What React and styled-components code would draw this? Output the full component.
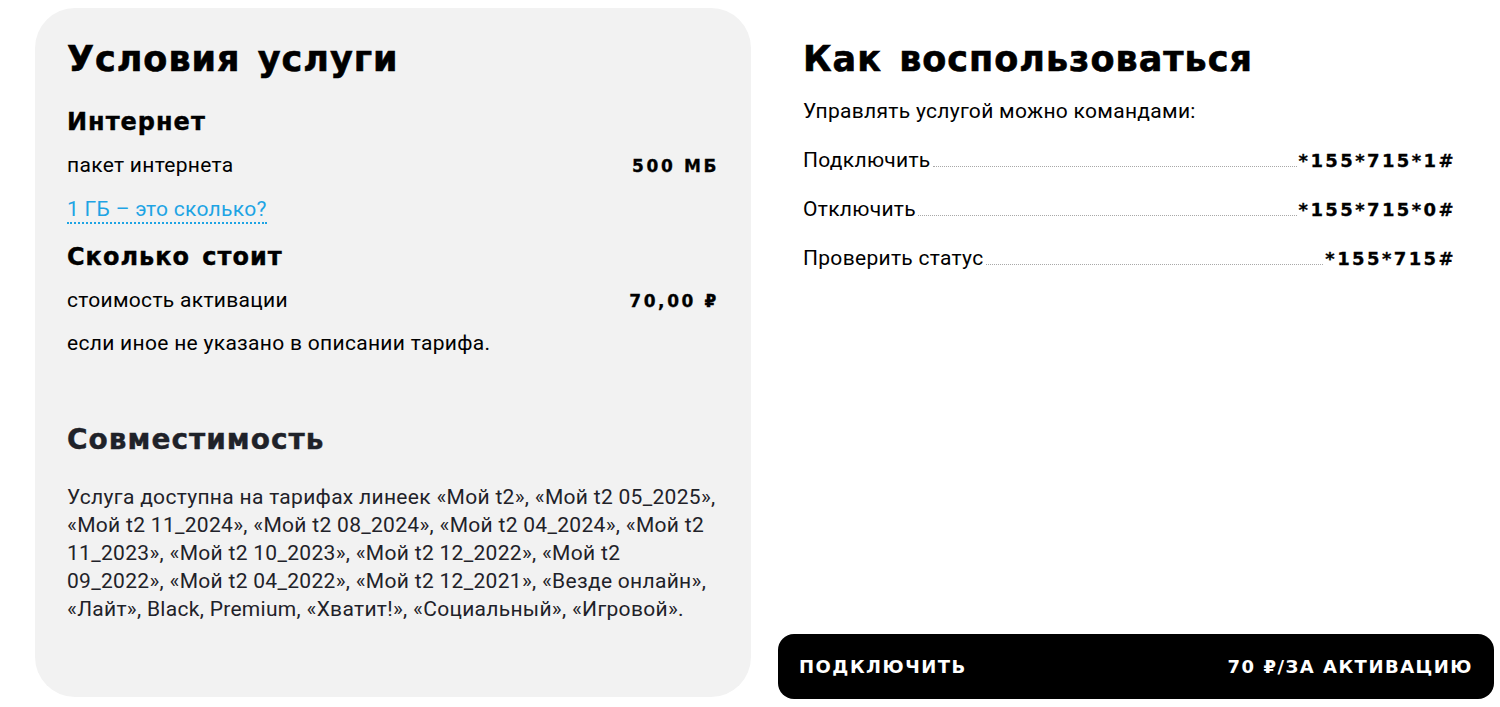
import React from 'react'
import styled, { createGlobalStyle } from 'styled-components'

const GlobalStyle = createGlobalStyle`
	body {
		margin: 0;
		background: #fff;
		color: #000;
		font-family: Roboto, "Noto Sans", sans-serif;
	}
`

const wide = `"DejaVu Sans", "Liberation Sans", sans-serif`

const Page = styled.main`
	display: grid;
	grid-template-columns: 716px 716px;
	column-gap: 27px;
	padding: 8px 0 0 35px;
`

const Card = styled.section`
	background: #f2f2f2;
	border-radius: 40px;
	height: 689px;
	box-sizing: border-box;
	padding: 30px 32px 0;
`

const Side = styled.section`
	display: flex;
	flex-direction: column;
	height: 691px;
`

const SideBody = styled.div`
	padding: 30px 38px 0 25px;
	flex: 1;
`

const Title = styled.h2`
	margin: 0;
	font-family: ${wide};
	font-weight: 700;
	font-size: 35px;
	line-height: 42px;
	letter-spacing: 1px;
	word-spacing: 4px;
	-webkit-text-stroke: 0.6px #000;
`

const SubTitle = styled.h3`
	margin: ${({ top }) => top || 0}px 0 0;
	font-family: ${wide};
	font-weight: 700;
	font-size: ${({ size }) => size || 24}px;
	line-height: 30px;
	letter-spacing: 1px;
	word-spacing: 3px;
	color: ${({ dim }) => (dim ? '#1f2229' : '#000')};
	-webkit-text-stroke: 0.4px currentColor;
`

const Row = styled.div`
	display: flex;
	justify-content: space-between;
	align-items: baseline;
	margin-top: ${({ top }) => top || 0}px;
`

const Text = styled.p`
	margin: ${({ top }) => top || 0}px 0 0;
	font-size: 21px;
	line-height: 28px;
	letter-spacing: 0.3px;
`

const Value = styled.span`
	font-family: ${wide};
	font-weight: 700;
	font-size: 17px;
	letter-spacing: 2.6px;
	-webkit-text-stroke: 0.3px #000;
`

const Link = styled.a`
	display: inline-block;
	margin-top: 17px;
	font-size: 21px;
	line-height: 26px;
	letter-spacing: 0.3px;
	color: #1ea4e4;
	text-decoration: none;
	border-bottom: 2px dotted #1ea4e4;
`

const Paragraph = styled.p`
	margin: 28px 0 0;
	font-size: 21px;
	line-height: 28px;
	letter-spacing: 0.3px;
	color: #1f2229;
`

const Command = styled.div`
	display: flex;
	align-items: baseline;
	margin-top: ${({ top }) => top || 0}px;
	font-size: 21px;
	line-height: 24px;
	letter-spacing: 0.3px;
`

const Leader = styled.span`
	flex: 1;
	border-bottom: 1px dotted #a8a8a8;
	margin: 0 2px;
`

const Code = styled.span`
	font-family: ${wide};
	font-weight: 700;
	font-size: 18px;
	letter-spacing: 2.4px;
	-webkit-text-stroke: 0.3px #000;
`

const Button = styled.button`
	display: flex;
	justify-content: space-between;
	align-items: center;
	height: 65px;
	padding: 0 21px;
	border: none;
	border-radius: 16px;
	background: #000;
	color: #fff;
	font-family: ${wide};
	font-weight: 700;
	font-size: 18px;
	letter-spacing: 1.5px;
	text-transform: uppercase;
	cursor: pointer;
`

const commands = [
	{ name: 'Подключить', code: '*155*715*1#' },
	{ name: 'Отключить', code: '*155*715*0#' },
	{ name: 'Проверить статус', code: '*155*715#' },
]

export default function App() {
	return (
		<>
			<GlobalStyle />
			<Page>
				<Card aria-label="Условия услуги">
					<Title>Условия услуги</Title>
					<SubTitle top={27}>Интернет</SubTitle>
					<Row top={14}>
						<Text>пакет интернета</Text>
						<Value>500 МБ</Value>
					</Row>
					<Link href="#">1 ГБ – это сколько?</Link>
					<SubTitle top={18}>Сколько стоит</SubTitle>
					<Row top={14}>
						<Text>стоимость активации</Text>
						<Value>70,00 ₽</Value>
					</Row>
					<Text top={15}>если иное не указано в описании тарифа.</Text>
					<SubTitle top={68} size={28} dim>
						Совместимость
					</SubTitle>
					<Paragraph>
						Услуга доступна на тарифах линеек «Мой t2», «Мой t2 05_2025»,
						«Мой t2 11_2024», «Мой t2 08_2024», «Мой t2 04_2024», «Мой t2
						11_2023», «Мой t2 10_2023», «Мой t2 12_2022», «Мой t2 09_2022»,
						«Мой t2 04_2022», «Мой t2 12_2021», «Везде онлайн», «Лайт»,
						Black, Premium, «Хватит!», «Социальный», «Игровой».
					</Paragraph>
				</Card>
				<Side aria-label="Как воспользоваться">
					<SideBody>
						<Title>Как воспользоваться</Title>
						<Text top={17}>Управлять услугой можно командами:</Text>
						{commands.map((c, i) => (
							<Command key={c.code} top={i === 0 ? 23 : 24}>
								<span>{c.name}</span>
								<Leader />
								<Code>{c.code}</Code>
							</Command>
						))}
					</SideBody>
					<Button>
						<span>Подключить</span>
						<span>70 ₽/за активацию</span>
					</Button>
				</Side>
			</Page>
		</>
	)
}
